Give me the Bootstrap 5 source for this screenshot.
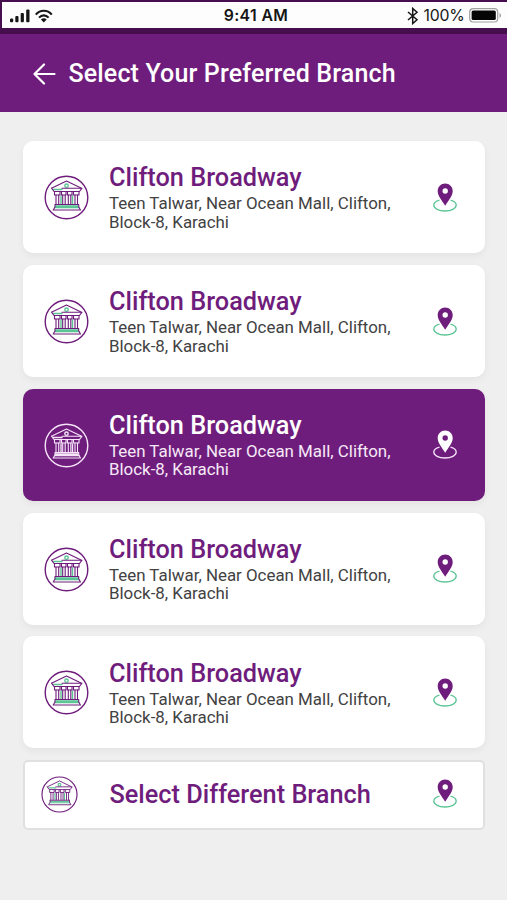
<!DOCTYPE html>
<html lang="en">
<head>
<meta charset="utf-8">
<meta name="viewport" content="width=device-width, initial-scale=1">
<title>Select Your Preferred Branch</title>
<link rel="stylesheet" href="https://cdn.jsdelivr.net/npm/bootstrap@5.3.0/dist/css/bootstrap.min.css">
<style>
:root { --brand: #6f1d7c; --brand-dark: #460e4f; --mint: #5cc495; }
body { background: #efefef; font-family: Roboto, "Liberation Sans", sans-serif; min-height: 900px; }
.status-wrap { background: var(--brand-dark); padding: 2px 0 6px 2px; }
.status-bar { height: 26px; background: #fdfdfd; color: #161616; padding: 1px 5px 0 8px; }
.status-side { flex: 1 1 0; }
.clock { font: 600 15.8px/26px Inter, sans-serif; letter-spacing: .4px; }
.battery-text { font: 400 15.8px/26px Inter, sans-serif; letter-spacing: -.2px; margin: 0 4.5px 0 4px; }
.app-header { height: 78px; background: var(--brand); padding: 2px 0 0 33px; }
.app-title { font-size: 25px; font-weight: 500; line-height: 30px; letter-spacing: .15px; margin-left: 12.5px; }
.branch-list { padding: 29.3px 22.5px 0 23.4px; gap: 11.8px; }
.branch { height: 112px; border-radius: 10px; background: #fff; box-shadow: 0 3px 7px rgba(0,0,0,.05); color: #424242; --line: var(--brand); --accent: var(--mint); padding: 1px 27.5px 0 20.8px; }
.branch.active { background: var(--brand); color: #f5e9f7; --line: #f6e4f9; --accent: #f6e4f9; --name: #fff; --pin: #fff; --hole: var(--brand); }
.branch-other { height: 70px; border: 2px solid #e0e0e0; border-radius: 5px; box-shadow: none; padding: 0 25.5px 2px 15.5px; }
.branch-name { font-size: 25.3px; font-weight: 500; line-height: 28px; color: var(--name, var(--brand)); margin-bottom: 2px; }
.branch-other .branch-name { margin-bottom: 0; }
.branch-address { font-size: 16.9px; line-height: 18.4px; }
.branch-body { margin-left: 19.8px; }
.branch-other .branch-body { margin-left: 31.6px; padding-top: 1px; }
svg { display: block; flex: none; }
</style>
<script src="https://cdn.jsdelivr.net/npm/bootstrap@5.3.0/dist/js/bootstrap.bundle.min.js"></script>
</head>
<body>
<svg width="0" height="0" class="position-absolute" aria-hidden="true">
  <symbol id="bank" viewBox="0 0 45 45">
    <g fill="none" style="stroke:var(--accent)" stroke-width="1.4" stroke-linecap="round">
      <circle cx="22.500" cy="10.700" r="1.700"/>
      <path d="M9.500 14.500H18M11.500 31H34M11 32.500H35M17 21v8M28.500 21v8"/>
    </g>
    <g fill="none" style="stroke:var(--line)" stroke-width="1.1" stroke-linejoin="round" stroke-linecap="round">
      <circle cx="22.5" cy="22.5" r="21.3" stroke-width="1.4"/>
      <path d="M8 13 22.500 6 37 13"/>
      <path d="M18 13.200H38L35.500 16.500H10L7.500 13.200"/>
      <path d="M10.500 17v3h5.500v-3M17.500 17v3h4.500v-3M23.500 17v3h4.500v-3M29.500 17v3h5.500v-3"/>
      <path d="M12 20v9M14.700 20v9M18.700 20v9M21.200 20v9M24.300 20v9M26.800 20v9M31 20v9M33.500 20v9"/>
      <path d="M11.300 29.500H34.500M11 29.500V32L9.200 35H36.500L34.700 32V29.500"/>
    </g>
  </symbol>
  <symbol id="pin" viewBox="0 0 24 30">
    <path d="M6.500 17.100C3 18 .8 19.800.8 22c0 3.500 5 6 11.200 6s11.200-2.500 11.200-6c0-2.200-2.200-4-5.700-4.900" fill="none" style="stroke:var(--accent)" stroke-width="1.300"/>
    <path d="M12.200.5C8 .5 4.700 3.800 4.700 8c0 5.300 4.300 9.400 7.500 14.700C15.400 17.400 19.700 13.300 19.700 8c0-4.200-3.300-7.500-7.500-7.500Z" style="fill:var(--pin,var(--brand))"/>
    <circle cx="12.200" cy="8" r="2.700" style="fill:var(--hole,#fff)"/>
  </symbol>
</svg>

<div class="status-wrap">
  <div class="status-bar d-flex align-items-center">
    <div class="status-side d-flex align-items-center">
      <svg width="20" height="14" viewBox="0 0 20 14" fill="#161616"><rect y="9.500" width="3.200" height="3.800" rx="1"/><rect x="5.300" y="7" width="3.200" height="6.300" rx="1"/><rect x="10.700" y="4" width="3.200" height="9.300" rx="1"/><rect x="16.200" y=".5" width="3.300" height="12.800" rx="1"/></svg>
      <svg class="ms-1" width="20" height="14" viewBox="0 0 20 14"><g fill="none" stroke="#161616" stroke-width="2.100"><path d="M1.800 5.600C6.300.5 13.300.5 17.800 5.600"/><path d="M5 8.600c2.800-3 6.800-3 9.600 0"/></g><path d="M6.900 10.500c1.800-1.600 4-1.600 5.800 0L9.800 13.400Z" fill="#161616"/></svg>
    </div>
    <div class="clock">9:41 AM</div>
    <div class="status-side d-flex align-items-center justify-content-end">
      <svg width="12" height="18" viewBox="0 0 12 18" fill="none" stroke="#161616" stroke-width="1.500"><path d="M1 5 10 12.700 5.700 16.500V1.500L10 5.300 1 13"/></svg>
      <div class="battery-text">100%</div>
      <svg width="33" height="15" viewBox="0 0 33 15"><rect x=".7" y=".7" width="28" height="13.300" rx="3.500" fill="#fff" stroke="#a0a0a0" stroke-width="1.200"/><rect x="2.600" y="2.600" width="24.200" height="9.500" rx="1.500" fill="#050505"/><path d="M30.500 5c2 .8 2 4 0 4.800Z" fill="#a0a0a0"/></svg>
    </div>
  </div>
</div>

<header class="app-header d-flex align-items-center text-white">
  <svg width="23" height="22" viewBox="0 0 23 22" fill="none" stroke="#fff" stroke-width="2.200" stroke-linecap="round" stroke-linejoin="round"><path d="M21.500 11H1.500M11 1.500 1.500 11l9.500 9.500"/></svg>
  <h1 class="app-title mb-0">Select Your Preferred Branch</h1>
</header>

<main class="branch-list d-flex flex-column">
  <div class="branch d-flex align-items-center">
    <svg width="45" height="45"><use href="#bank"/></svg>
    <div class="branch-body flex-grow-1"><div class="branch-name">Clifton Broadway</div><div class="branch-address">Teen Talwar, Near Ocean Mall, Clifton,<br>Block-8, Karachi</div></div>
    <svg width="24" height="30"><use href="#pin"/></svg>
  </div>
  <div class="branch d-flex align-items-center">
    <svg width="45" height="45"><use href="#bank"/></svg>
    <div class="branch-body flex-grow-1"><div class="branch-name">Clifton Broadway</div><div class="branch-address">Teen Talwar, Near Ocean Mall, Clifton,<br>Block-8, Karachi</div></div>
    <svg width="24" height="30"><use href="#pin"/></svg>
  </div>
  <div class="branch active d-flex align-items-center">
    <svg width="45" height="45"><use href="#bank"/></svg>
    <div class="branch-body flex-grow-1"><div class="branch-name">Clifton Broadway</div><div class="branch-address">Teen Talwar, Near Ocean Mall, Clifton,<br>Block-8, Karachi</div></div>
    <svg width="24" height="30"><use href="#pin"/></svg>
  </div>
  <div class="branch d-flex align-items-center">
    <svg width="45" height="45"><use href="#bank"/></svg>
    <div class="branch-body flex-grow-1"><div class="branch-name">Clifton Broadway</div><div class="branch-address">Teen Talwar, Near Ocean Mall, Clifton,<br>Block-8, Karachi</div></div>
    <svg width="24" height="30"><use href="#pin"/></svg>
  </div>
  <div class="branch d-flex align-items-center">
    <svg width="45" height="45"><use href="#bank"/></svg>
    <div class="branch-body flex-grow-1"><div class="branch-name">Clifton Broadway</div><div class="branch-address">Teen Talwar, Near Ocean Mall, Clifton,<br>Block-8, Karachi</div></div>
    <svg width="24" height="30"><use href="#pin"/></svg>
  </div>
  <div class="branch branch-other d-flex align-items-center">
    <svg width="37" height="37"><use href="#bank"/></svg>
    <div class="branch-body flex-grow-1"><div class="branch-name">Select Different Branch</div></div>
    <svg width="24" height="30"><use href="#pin"/></svg>
  </div>
</main>
</body>
</html>
